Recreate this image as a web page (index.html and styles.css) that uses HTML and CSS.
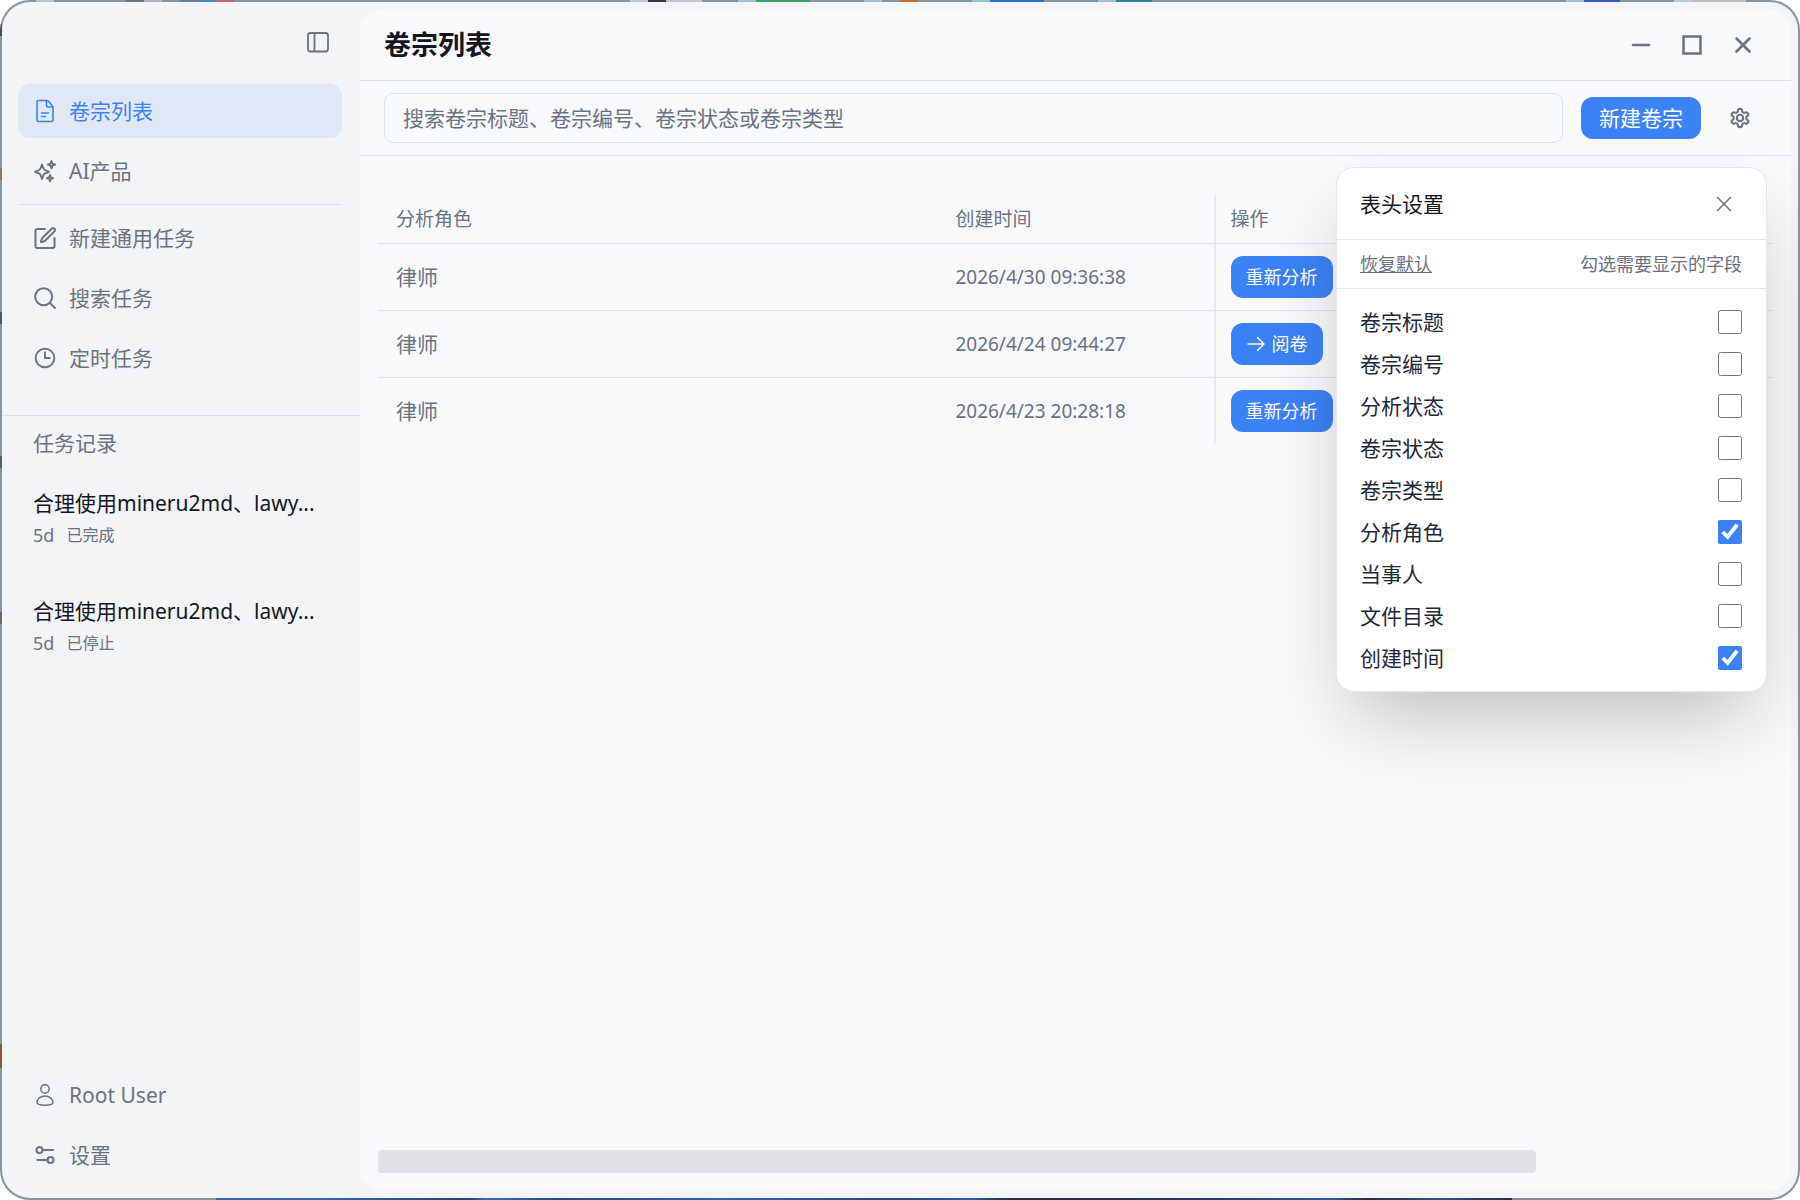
FILE: index.html
```html
<!DOCTYPE html>
<html lang="zh-CN">
<head>
<meta charset="utf-8">
<meta name="viewport" content="width=device-width, initial-scale=1">
<title>卷宗列表</title>
<link rel="stylesheet" href="styles.css">
</head>
<body>
<div class="desktop">
<div class="window">
  <aside class="sidebar">
    <div class="sidebar-top">
      <button class="icon-btn" type="button" aria-label="折叠侧栏">
        <svg width="24" height="24" viewBox="0 0 24 24" fill="none" stroke="currentColor" stroke-width="1.8"><rect x="2" y="3" width="20" height="18.500" rx="2.500"/><path d="M8.500 3v18.500"/></svg>
      </button>
    </div>
    <nav class="nav">
      <a class="nav-item active" href="#cases">
        <svg class="ico" viewBox="0 0 24 24" fill="none" stroke="currentColor" stroke-width="1.600" stroke-linejoin="round" stroke-linecap="round"><path d="M14 1.500H5.500A1.500 1.500 0 0 0 4 3v18A1.500 1.500 0 0 0 5.500 22.500h13A1.500 1.500 0 0 0 20 21V8.500c0-.8-.3-1.400-.9-2L15.700 2.400C15.200 1.800 14.700 1.500 14 1.500z"/><path d="M13.500 2v4.500A1.500 1.500 0 0 0 15 8h4.500M8.500 14h7M8.500 17.500h4"/></svg>
        卷宗列表</a>
      <a class="nav-item" href="#ai">
        <svg class="ico" viewBox="0 0 24 24" fill="none" stroke="currentColor" stroke-width="1.900" stroke-linejoin="round"><path d="M9 5.500l1.700 4.300a2 2 0 0 0 1.200 1.200L16 12.800l-4.100 1.700a2 2 0 0 0-1.200 1.200L9 20l-1.700-4.300a2 2 0 0 0-1.200-1.200L2 12.800 6.100 11a2 2 0 0 0 1.200-1.200z"/><path d="M18.500 2l1 2.700 2.700 1-2.700 1-1 2.700-1-2.700-2.700-1 2.700-1zM17 16l.9 2.300 2.300.9-2.300.9L17 22.400l-.9-2.300-2.300-.9 2.300-.9z"/></svg>
        AI产品</a>
      <hr class="nav-rule">
      <a class="nav-item" href="#new">
        <svg class="ico" viewBox="0 0 24 24" fill="none" stroke="currentColor" stroke-width="2" stroke-linecap="round" stroke-linejoin="round"><path d="M12 3H4.200A1.700 1.700 0 0 0 2.500 4.700v15.600A1.700 1.700 0 0 0 4.200 22h15.600a1.700 1.700 0 0 0 1.700-1.700V12"/><path d="M18.700 2.700a1.900 1.900 0 0 1 2.700 2.700L12.300 14.500c-1 1-2.300 1.500-4.300 1.600.1-2 .6-3.300 1.600-4.300z"/></svg>
        新建通用任务</a>
      <a class="nav-item" href="#search">
        <svg class="ico" viewBox="0 0 24 24" fill="none" stroke="currentColor" stroke-width="2" stroke-linecap="round"><circle cx="10.700" cy="10.700" r="8.500"/><path d="M17 17l5 5"/></svg>
        搜索任务</a>
      <a class="nav-item" href="#timer">
        <svg class="ico" viewBox="0 0 24 24" fill="none" stroke="currentColor" stroke-width="1.900"><circle cx="12" cy="12" r="9.300"/><path d="M12 5.500V12h5.500"/></svg>
        定时任务</a>
    </nav>
    <section class="history">
      <h2 class="history-title">任务记录</h2>
      <a class="task" href="#task-1">
        <span class="task-name">合理使用mineru2md、lawy...</span>
        <span class="task-meta"><span>5d</span><span class="task-state">已完成</span></span>
      </a>
      <a class="task" href="#task-2">
        <span class="task-name">合理使用mineru2md、lawy...</span>
        <span class="task-meta"><span>5d</span><span class="task-state">已停止</span></span>
      </a>
    </section>
    <div class="account">
      <a class="nav-item" href="#user">
        <svg class="ico" viewBox="0 0 24 24" fill="none" stroke="currentColor" stroke-width="1.500"><circle cx="12" cy="6" r="4.200"/><path d="M12 13c4.700 0 8 3.300 8 6.500 0 1.600-3.500 2.700-8 2.700s-8-1.100-8-2.700C4 16.300 7.300 13 12 13z"/></svg>
        Root User</a>
      <a class="nav-item" href="#settings">
        <svg class="ico" viewBox="0 0 24 24" fill="none" stroke="currentColor" stroke-width="2.100" stroke-linecap="round"><circle cx="6.500" cy="7" r="3"/><path d="M9.500 7H20M4.500 17h10"/><circle cx="17.500" cy="17" r="3"/></svg>
        设置</a>
    </div>
  </aside>

  <main class="panel">
    <header class="panel-head">
      <h1 class="title">卷宗列表</h1>
      <div class="win-controls">
        <button class="icon-btn" type="button" aria-label="最小化"><svg width="24" height="24" viewBox="0 0 24 24" fill="none" stroke="currentColor" stroke-width="2.700" stroke-linecap="round"><path d="M4 12h16"/></svg></button>
        <button class="icon-btn" type="button" aria-label="最大化"><svg width="24" height="24" viewBox="0 0 24 24" fill="none" stroke="currentColor" stroke-width="2.500"><rect x="3.500" y="3.500" width="17" height="17"/></svg></button>
        <button class="icon-btn" type="button" aria-label="关闭"><svg width="24" height="24" viewBox="0 0 24 24" fill="none" stroke="currentColor" stroke-width="2.600" stroke-linecap="round"><path d="M5.500 5.500l13 13M18.500 5.500l-13 13"/></svg></button>
      </div>
    </header>

    <div class="toolbar">
      <input class="search" type="text" aria-label="搜索" placeholder="搜索卷宗标题、卷宗编号、卷宗状态或卷宗类型">
      <button class="btn btn-new" type="button">新建卷宗</button>
      <button class="icon-btn gear" type="button" aria-label="表头设置">
        <svg width="24" height="24" viewBox="0 0 24 24" fill="none" stroke="currentColor" stroke-width="2.300" stroke-linejoin="round"><path d="M12.220 2h-.44a2 2 0 0 0-2 2v.18a2 2 0 0 1-1 1.730l-.43.25a2 2 0 0 1-2 0l-.15-.08a2 2 0 0 0-2.730.73l-.22.38a2 2 0 0 0 .73 2.730l.15.1a2 2 0 0 1 1 1.720v.51a2 2 0 0 1-1 1.740l-.15.09a2 2 0 0 0-.73 2.730l.22.38a2 2 0 0 0 2.730.73l.15-.08a2 2 0 0 1 2 0l.43.25a2 2 0 0 1 1 1.730V20a2 2 0 0 0 2 2h.44a2 2 0 0 0 2-2v-.18a2 2 0 0 1 1-1.730l.43-.25a2 2 0 0 1 2 0l.15.08a2 2 0 0 0 2.730-.73l.22-.39a2 2 0 0 0-.73-2.730l-.15-.08a2 2 0 0 1-1-1.740v-.5a2 2 0 0 1 1-1.740l.15-.09a2 2 0 0 0 .73-2.730l-.22-.38a2 2 0 0 0-2.730-.73l-.15.08a2 2 0 0 1-2 0l-.43-.25a2 2 0 0 1-1-1.730V4a2 2 0 0 0-2-2z"/><circle cx="12" cy="12" r="3.500"/></svg>
      </button>

      <section class="popover" aria-label="表头设置">
        <div class="pop-head">
          <h2 class="pop-title">表头设置</h2>
          <button class="icon-btn" type="button" aria-label="关闭设置"><svg width="24" height="24" viewBox="0 0 24 24" fill="none" stroke="currentColor" stroke-width="1.600" stroke-linecap="round"><path d="M5 5l14 14M19 5L5 19"/></svg></button>
        </div>
        <div class="pop-sub">
          <button class="link-btn" type="button">恢复默认</button>
          <span>勾选需要显示的字段</span>
        </div>
        <div class="options">
          <label class="option">卷宗标题<input type="checkbox"></label>
          <label class="option">卷宗编号<input type="checkbox"></label>
          <label class="option">分析状态<input type="checkbox"></label>
          <label class="option">卷宗状态<input type="checkbox"></label>
          <label class="option">卷宗类型<input type="checkbox"></label>
          <label class="option">分析角色<input type="checkbox" checked></label>
          <label class="option">当事人<input type="checkbox"></label>
          <label class="option">文件目录<input type="checkbox"></label>
          <label class="option">创建时间<input type="checkbox" checked></label>
        </div>
      </section>
    </div>

    <div class="content">
      <table class="table">
        <thead>
          <tr><th class="col-role">分析角色</th><th class="col-time">创建时间</th><th class="col-act">操作</th></tr>
        </thead>
        <tbody>
          <tr><td>律师</td><td class="time">2026/4/30 09:36:38</td><td><button class="btn btn-row" type="button">重新分析</button></td></tr>
          <tr><td>律师</td><td class="time">2026/4/24 09:44:27</td><td><button class="btn btn-row" type="button"><svg width="20" height="20" viewBox="0 0 20 20" fill="none" stroke="currentColor" stroke-width="1.500" stroke-linecap="round" stroke-linejoin="round"><path d="M2 10h16M11.500 3.500L18 10l-6.500 6.500"/></svg>阅卷</button></td></tr>
          <tr><td>律师</td><td class="time">2026/4/23 20:28:18</td><td><button class="btn btn-row" type="button">重新分析</button></td></tr>
        </tbody>
      </table>
      <div class="scroll-track"><div class="scroll-thumb"></div></div>
    </div>
  </main>
</div>
</div>
</body>
</html>
```

FILE: styles.css
```css
* { box-sizing: border-box; }

body {
  margin: 0;
  background: #fff;
  color: #6b7280;
  font-family: "Noto Sans", "Noto Sans CJK SC", sans-serif;
  font-size: 21px;
  font-weight: 400;
  line-height: 30px;
}

h1, h2 { margin: 0; }
a { color: inherit; text-decoration: none; }
button, input { font: inherit; color: inherit; margin: 0; }
button { border: 0; background: none; padding: 0; cursor: pointer; }
svg { display: block; flex: none; }

/* wallpaper and desktop icons that show round the window's edge */
.desktop {
  display: flex;
  min-height: 100vh;
  padding: 2px;
  border-radius: 30px;
  background:
    linear-gradient(90deg,
      transparent 2%, #b8c4cc 2% 3%, transparent 3% 7%,
      #6b7480 7% 8%, #b0b4b8 8% 9%, transparent 9% 10%,
      #6a7f9a 10% 11%, #3f8fc0 11% 12%, #c9666f 12% 13%, transparent 13% 35%,
      #c4c8ca 35% 36%, #3a3a3c 36% 37%, #c4c8ca 37% 39%, transparent 39% 41%,
      #9fc0d4 41% 42%, #33a163 42% 45%, transparent 45% 48%,
      #9fc0d4 48% 49%, transparent 49% 50%, #d0682e 50% 51%, transparent 51% 54%,
      #9fc0d4 54% 55%, #2f6fd0 55% 58%, transparent 58% 61%,
      #9fc0d4 61% 62%, #2f7f9f 62% 64%, transparent 64% 87%,
      #9fc0d4 87% 88%, #3358b8 88% 90%, transparent 90% 93%,
      #b8ccd8 93% 94%, #c4b8b8 94% 97%, transparent 97%) top / 100% 2px no-repeat,
    linear-gradient(90deg,
      #87939b 12%, #3d5fa8 12%, #2f68b0 17%, #34508f 22%, #2c4078 26%,
      #3a66b0 27%, #2e4786 31%, #3a5aa6 40%, #2d4484 50%, #3057a8 54%,
      #2a2d3c 56%, #2b3050 64%, #33549e 74%, #2b2c3a 76%, #34508f 80%,
      #2b2c3a 84%, #878d99 84%) bottom / 100% 2px no-repeat,
    linear-gradient(
      transparent 2%, #54484c 2% 3%, transparent 3% 14%,
      #8f7a58 14% 15%, transparent 15% 26%, #4c5866 26% 27%, transparent 27% 38%,
      #5a5c60 38% 39%, transparent 39% 51%, #6c6868 51% 52%, transparent 52% 87%,
      #8a5a2c 87% 89%, transparent 89%) left / 2px 100% no-repeat,
    #8496a3;
}

.window {
  flex: 1;
  display: flex;
  padding: 7px 7px 7px 0;
  border-radius: 28px;
  background: #f2f4f6;
}

/* sidebar */
.sidebar {
  flex: none;
  width: 358px;
  display: flex;
  flex-direction: column;
}

.sidebar-top {
  display: flex;
  justify-content: flex-end;
  padding: 21px 30px;
}

.icon-btn {
  display: flex;
  align-items: center;
  justify-content: center;
  width: 24px;
  height: 24px;
}

.nav {
  display: flex;
  flex-direction: column;
  gap: 6px;
  padding: 9px 18px 30px 16px;
  border-bottom: 1px solid #dfe2e6;
}

.nav-item {
  display: flex;
  align-items: center;
  gap: 12px;
  height: 54px;
  padding: 0 15px;
  border-radius: 12px;
}

.nav-item.active {
  background: #e0e7f5;
  color: #3b82f6;
}

.ico { width: 24px; height: 24px; }

.nav-rule {
  width: 100%;
  height: 1px;
  margin: 0;
  border: 0;
  background: #dfe2e6;
}

.history {
  flex: 1;
  padding: 12px 31px;
}

.history-title {
  font-size: 21px;
  font-weight: 400;
}

.task {
  display: flex;
  flex-direction: column;
  gap: 2px;
  margin-top: 30px;
  padding-bottom: 16px;
}

.task-name { color: #14171f; white-space: nowrap; }

.task-meta {
  display: flex;
  align-items: center;
  gap: 12px;
  font-size: 18px;
}

.task-state { font-size: 16px; }

.account {
  display: flex;
  flex-direction: column;
  gap: 6px;
  padding: 0 18px 9px 16px;
}

/* main panel */
.panel {
  flex: 1;
  min-width: 0;
  display: flex;
  flex-direction: column;
  border-radius: 21px;
  background: #f8f9fb;
}

.panel-head {
  display: flex;
  align-items: center;
  justify-content: space-between;
  height: 72px;
  padding: 1px 36px 0 24px;
  border-bottom: 1px solid #dfe2e6;
}

.title {
  color: #14171f;
  font-size: 27px;
  font-weight: 700;
}

.win-controls { display: flex; gap: 27px; }

.toolbar {
  position: relative;
  display: flex;
  align-items: center;
  padding: 12px 39px 12px 24px;
  border-bottom: 1px solid #dfe2e6;
}

.search {
  flex: 1;
  min-width: 0;
  height: 50px;
  padding: 0 18px;
  border: 1px solid #dfe2e6;
  border-radius: 9px;
  background: transparent;
}

.search::placeholder { color: #6b7280; opacity: 1; }

.btn {
  display: flex;
  align-items: center;
  justify-content: center;
  gap: 6px;
  height: 42px;
  border-radius: 12px;
  background: #3b82f6;
  color: #fff;
}

.btn-new { padding: 0 18px; margin-left: 18px; }
.btn-row { padding: 0 15px; font-size: 18px; }
.gear { margin-left: 27px; }
.gear svg { width: 22px; }

/* column settings */
.popover {
  position: absolute;
  top: calc(100% + 12px);
  right: 24px;
  z-index: 2;
  width: 431px;
  border: 1px solid #e5e7eb;
  border-radius: 18px;
  background: #fff;
  color: #1f2937;
  box-shadow: 0 37px 75px -18px rgba(0, 0, 0, .25);
}

.pop-head {
  display: flex;
  align-items: center;
  justify-content: space-between;
  height: 72px;
  padding: 0 30px 0 23px;
  border-bottom: 1px solid #e5e7eb;
}

.pop-head .icon-btn { color: #6b7280; }
.pop-head svg { width: 22px; }

.pop-title {
  color: #14171f;
  font-size: 21px;
  font-weight: 400;
}

.pop-sub {
  display: flex;
  align-items: center;
  justify-content: space-between;
  height: 49px;
  padding: 0 24px 0 23px;
  border-bottom: 1px solid #e5e7eb;
  color: #6b7280;
  font-size: 18px;
}

.link-btn { text-decoration: underline; }

.options { padding: 12px 24px 12px 23px; }

.option {
  display: flex;
  align-items: center;
  justify-content: space-between;
  height: 42px;
}

.option input {
  width: 24px;
  height: 24px;
  accent-color: #3b82f6;
}

/* case table */
.content {
  flex: 1;
  display: flex;
  flex-direction: column;
  justify-content: space-between;
  padding: 39px 18px 18px;
}

.table {
  width: 100%;
  table-layout: fixed;
  border-collapse: separate;
  border-spacing: 0;
}

.table th, .table td {
  padding: 0 18px;
  text-align: left;
  font-weight: 400;
}

.table th { height: 49px; font-size: 19px; }
.table td { height: 67px; }
.table .time { font-size: 19px; }
.table tr > * { border-bottom: 1px solid #dfe2e6; }
.table tbody tr:last-child > * { height: 66px; border-bottom: 0; }
.table tr > :last-child { border-left: 2px solid #e8eaed; padding-left: 15px; }
.table tr > .col-role { width: 40.1%; }
.table tr > .col-time { width: 19.8%; }

.scroll-track { height: 23px; }

.scroll-thumb {
  width: 83%;
  height: 100%;
  border-radius: 4px;
  background: #e0e1e6;
}
```
